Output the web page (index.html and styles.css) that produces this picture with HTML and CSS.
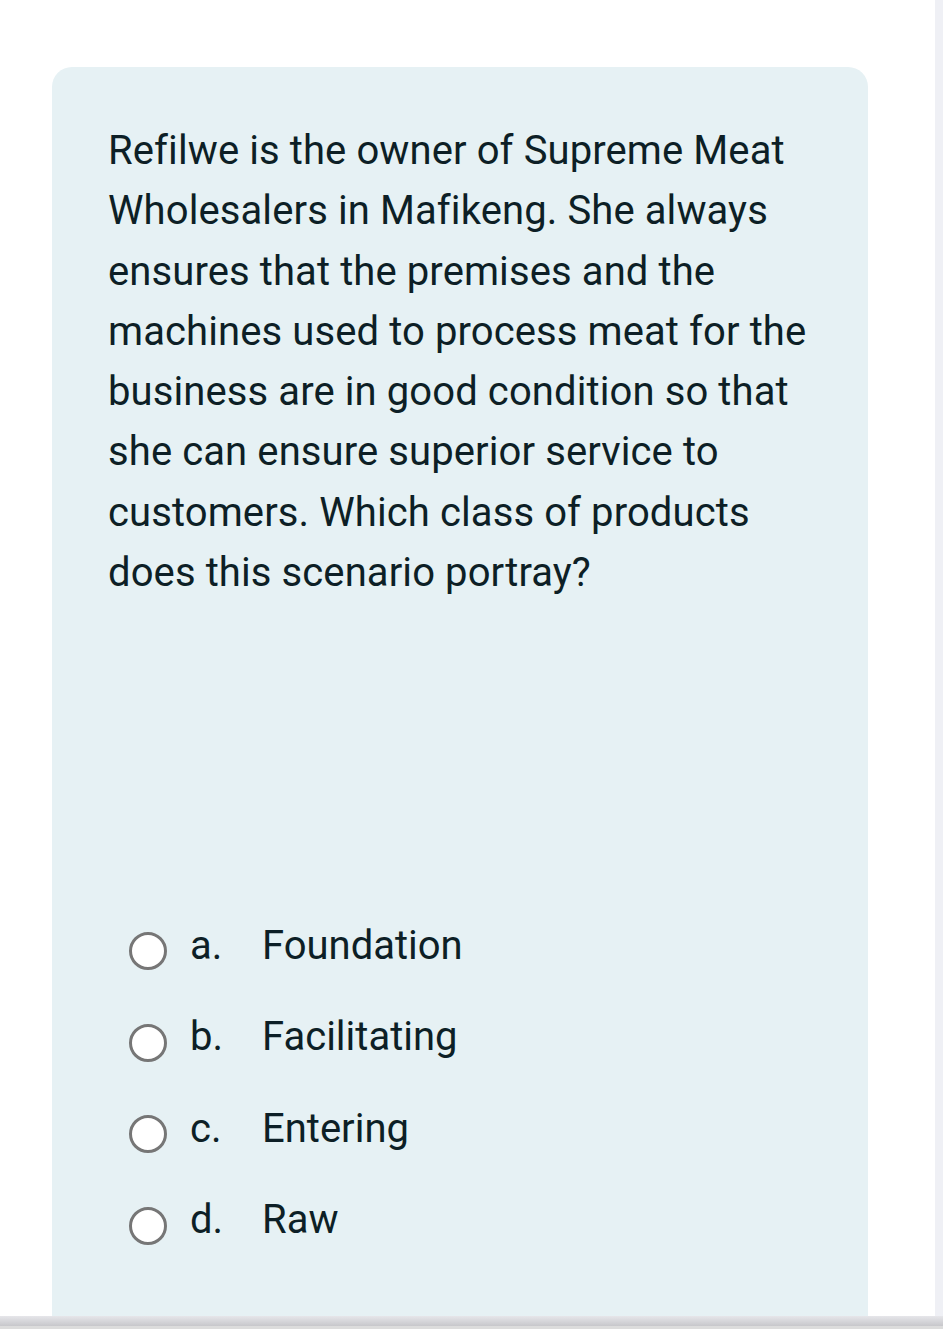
FILE: index.html
```html
<!DOCTYPE html>
<html>
<head>
<meta charset="utf-8">
<link rel="stylesheet" href="styles.css">
</head>
<body>
<div class="page">
  <main class="content">
    <section class="card">
      <p class="question">Refilwe is the owner of Supreme Meat Wholesalers in Mafikeng. She always ensures that the premises and the machines used to process meat for the business are in good condition so that she can ensure superior service to customers. Which class of products does this scenario portray?</p>
      <div class="options">
        <label class="option"><span class="radio"></span><span class="letter">a.</span><span class="answer">Foundation</span></label>
        <label class="option"><span class="radio"></span><span class="letter">b.</span><span class="answer">Facilitating</span></label>
        <label class="option"><span class="radio"></span><span class="letter">c.</span><span class="answer">Entering</span></label>
        <label class="option"><span class="radio"></span><span class="letter">d.</span><span class="answer">Raw</span></label>
      </div>
    </section>
  </main>
  <div class="scrollstrip"></div>
</div>
<div class="bottombar"></div>
</body>
</html>
```

FILE: styles.css
```css
html, body {
  margin: 0;
  padding: 0;
  background: #ffffff;
}
body {
  width: 943px;
  height: 1344px;
  overflow: hidden;
  font-family: Roboto, "Liberation Sans", sans-serif;
  color: #0d1f26;
}
.page {
  display: flex;
  height: 1316px;
  overflow: hidden;
}
.content {
  flex: 1;
  padding: 67px 67px 0 52px;
}
.scrollstrip {
  width: 8px;
  background: #eff0f5;
}
.card {
  background: #e6f1f4;
  border-radius: 20px;
  padding: 54px 40px 80px 56px;
  min-height: 1300px;
  box-sizing: border-box;
}
.question {
  margin: 0;
  font-size: 40px;
  line-height: 60.3px;
  letter-spacing: 0.1px;
}
.options {
  margin-top: 296px;
  display: flex;
  flex-direction: column;
  padding-left: 21px;
}
.option {
  display: flex;
  align-items: center;
  height: 91.5px;
  font-size: 40px;
}
.radio {
  width: 32px;
  height: 32px;
  border: 3px solid #767676;
  border-radius: 50%;
  background: #ffffff;
  flex: none;
  margin-right: 23px;
  position: relative;
  top: 6px;
}
.letter {
  width: 72px;
}
.bottombar {
  height: 10px;
  background: linear-gradient(#e6e6ea, #c7c7cb);
  border-bottom: 3px solid #dcdcdc;
}
```
